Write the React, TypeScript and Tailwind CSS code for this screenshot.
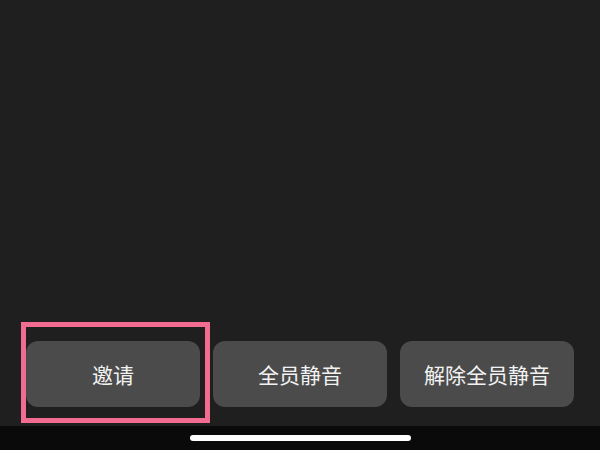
import React from "react";

const actions = ["邀请", "全员静音", "解除全员静音"];

export default function App() {
  return (
    <div
      className="w-[600px] h-[450px] flex flex-col bg-[#1f1f1f] overflow-hidden"
      style={{ fontFamily: '"Noto Sans CJK SC", "Noto Sans", sans-serif' }}
    >
      <div className="flex-1" />

      {/* Action buttons */}
      <div className="flex gap-[13px] pl-[26px] pb-[19px]">
        {actions.map((label, i) => (
          <div key={label} className="relative">
            {i === 0 && (
              <div className="absolute -left-[5px] -top-[19px] w-[189px] h-[101px] border-[5px] border-[#f26b90] pointer-events-none" />
            )}
            <button className="w-[174px] h-[66px] rounded-[12px] bg-[#4b4b4b] text-[#f2f2f2] text-[21px] leading-none">
              {label}
            </button>
          </div>
        ))}
      </div>

      {/* Home indicator bar */}
      <div className="h-[24px] bg-[#0a0a0a] flex justify-center pt-[9px]">
        <div className="w-[221px] h-[6px] rounded-full bg-white" />
      </div>
    </div>
  );
}
